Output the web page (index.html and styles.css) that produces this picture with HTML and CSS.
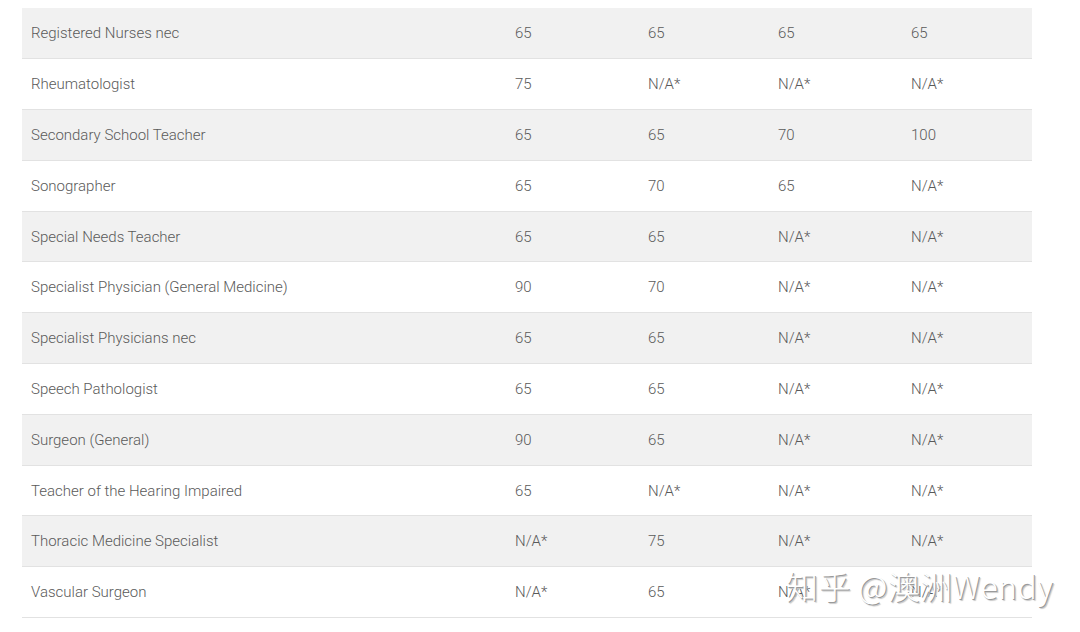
FILE: index.html
```html
<!DOCTYPE html>
<html>
<head>
<meta charset="utf-8">
<link rel="stylesheet" href="styles.css">
</head>
<body>
<div class="page">
  <table class="scores">
    <colgroup>
      <col class="c-name"><col class="c-a"><col class="c-b"><col class="c-c"><col class="c-d">
    </colgroup>
    <tbody>
      <tr><td>Registered Nurses nec</td><td>65</td><td>65</td><td>65</td><td>65</td></tr>
      <tr><td>Rheumatologist</td><td>75</td><td>N/A*</td><td>N/A*</td><td>N/A*</td></tr>
      <tr><td>Secondary School Teacher</td><td>65</td><td>65</td><td>70</td><td>100</td></tr>
      <tr><td>Sonographer</td><td>65</td><td>70</td><td>65</td><td>N/A*</td></tr>
      <tr><td>Special Needs Teacher</td><td>65</td><td>65</td><td>N/A*</td><td>N/A*</td></tr>
      <tr><td>Specialist Physician (General Medicine)</td><td>90</td><td>70</td><td>N/A*</td><td>N/A*</td></tr>
      <tr><td>Specialist Physicians nec</td><td>65</td><td>65</td><td>N/A*</td><td>N/A*</td></tr>
      <tr><td>Speech Pathologist</td><td>65</td><td>65</td><td>N/A*</td><td>N/A*</td></tr>
      <tr><td>Surgeon (General)</td><td>90</td><td>65</td><td>N/A*</td><td>N/A*</td></tr>
      <tr><td>Teacher of the Hearing Impaired</td><td>65</td><td>N/A*</td><td>N/A*</td><td>N/A*</td></tr>
      <tr><td>Thoracic Medicine Specialist</td><td>N/A*</td><td>75</td><td>N/A*</td><td>N/A*</td></tr>
      <tr><td>Vascular Surgeon</td><td>N/A*</td><td>65</td><td>N/A*</td><td>N/A*</td></tr>
    </tbody>
  </table>
  <div class="watermark">知乎 @澳洲Wendy</div>
</div>
</body>
</html>
```
FILE: styles.css
```css
html, body {
  margin: 0;
  padding: 0;
  background: #ffffff;
}
.page {
  position: relative;
  width: 1080px;
  height: 632px;
  overflow: hidden;
  padding: 8px 0 0 22px;
  box-sizing: border-box;
}
.scores {
  width: 1010px;
  border-collapse: collapse;
  table-layout: fixed;
  font-family: Roboto, "Liberation Sans", sans-serif;
  font-weight: 300;
  font-size: 15px;
  color: #5a5a5a;
}
.c-name { width: 484px; }
.c-a { width: 133px; }
.c-b { width: 130px; }
.c-c { width: 133px; }
.c-d { width: 130px; }
.scores td {
  padding: 0 9px;
  border-bottom: 1px solid #e2e2e2;
  vertical-align: middle;
  box-sizing: border-box;
  height: 50.8px;
}
.scores tr:nth-child(odd) td {
  background: #f1f1f1;
}
.watermark {
  position: absolute;
  left: 786px;
  top: 562px;
  font-family: "Noto Sans CJK SC", "Noto Sans", sans-serif;
  font-size: 32px;
  font-weight: 300;
  color: #ffffff;
  letter-spacing: 0.4px;
  text-shadow: 1px 1px 0 #9a9a9a, 2px 2px 1px #c8c8c8;
  white-space: nowrap;
}
```
